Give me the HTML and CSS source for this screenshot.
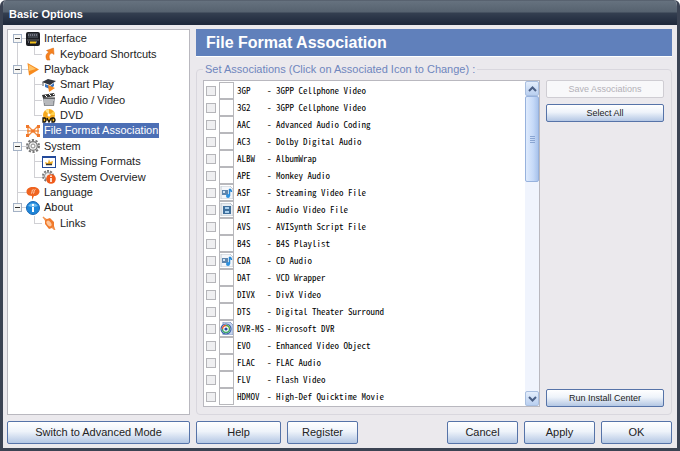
FILE: index.html
```html
<!DOCTYPE html>
<html lang="en">
<head>
<meta charset="utf-8">
<title>Basic Options</title>
<link rel="stylesheet" href="styles.css">
</head>
<body>
<div class="window">
  <header class="titlebar">Basic Options</header>
  <main class="body">
    <nav class="tree" aria-label="Option pages">
      <ul>
        <li class="root first"><button class="toggle" aria-label="Collapse Interface"></button>
          <svg class="ico" viewBox="0 0 14 14"><rect x="0" y="0" width="14" height="14" rx="2" fill="#1c1e22"/><rect x="2" y="1" width="10" height="5" fill="#3c4148"/><path d="M2 3h10M2 10h2M10 10h2" stroke="#aab" stroke-width="1" stroke-dasharray="1 1"/><path d="M4 10.500h6" stroke="#f5c21b" stroke-width="2"/><path d="M1 8h12" stroke="#666"/></svg>
          <a href="#interface">Interface</a></li>
        <li class="child last"><svg class="ico" viewBox="0 0 14 14"><path d="M5 13C3 9.500 4 6.500 7 5L4.500 3.500 11.500 1 12 7.500 10 6C7 7 6.500 9.500 8 13z" fill="#f58220" stroke="#d9660d" stroke-width=".5"/></svg>
          <a href="#keyboard">Keyboard Shortcuts</a></li>
        <li class="root"><button class="toggle" aria-label="Collapse Playback"></button>
          <svg class="ico" viewBox="0 0 14 14"><path d="M1.500 1 13 7.500 3 13.500z" fill="#f78b1e"/><path d="M2.500 2.500 10 7 3 9z" fill="#ffc266"/></svg>
          <a href="#playback">Playback</a></li>
        <li class="child"><svg class="ico" viewBox="0 0 14 14"><path d="M0 4 6 1l8 2-6 4z" fill="#30343c"/><path d="M3 6l5 2 4-3v3L8 11 3 9z" fill="#3973be"/><path d="M6 7l7 3-6 4z" fill="#f58a20"/><path d="M1 4v4" stroke="#555"/></svg>
          <a href="#smart">Smart Play</a></li>
        <li class="child"><svg class="ico" viewBox="0 0 14 14"><path d="M0 2 12 0l1 3L1 5z" fill="#333"/><path d="M3 2l2 2M7 1l2 2M11 1l1 1" stroke="#fff"/><path d="M1 5h12l-1 8H2z" fill="#8b8e93"/><path d="M2 7h10M2 9h9M3 11h8" stroke="#e2e3e5"/><path d="M1 5h12" stroke="#333"/></svg>
          <a href="#av">Audio / Video</a></li>
        <li class="child last"><svg class="ico" viewBox="0 0 14 14"><circle cx="7" cy="6" r="6" fill="#f5a81c"/><path d="M7 6 3 1.500 7 0z" fill="#ffe48a"/><path d="M7 6l5-4 1 4z" fill="#ffd34f"/><circle cx="7" cy="6" r="1.500" fill="#fff"/><path d="M1 9v4h2q2-2 0-4zM5 9l2 4 2-4M10 9v4h2q2-2 0-4z" fill="#f9bd21" stroke="#17130a" stroke-width="1.300"/></svg>
          <a href="#dvd">DVD</a></li>
        <li class="root"><svg class="ico lone" viewBox="0 0 14 14"><path d="M2 2l10 10M12 2 2 12M2 2v10M12 2v10M7 7h6M1 7h6" stroke="#f28a3c" stroke-width="1.300"/><path d="M0 1h3v3H0zM11 1h3v3h-3zM0 10h3v3H0zM11 10h3v3h-3zM5.500 5.500h3v3h-3z" fill="#f0772a"/></svg>
          <a class="selected" href="#formats" aria-current="page">File Format Association</a></li>
        <li class="root"><button class="toggle" aria-label="Collapse System"></button>
          <svg class="ico" viewBox="0 0 14 14"><circle cx="7" cy="7" r="6" fill="none" stroke="#777" stroke-width="2" stroke-dasharray="2.200 1.570"/><circle cx="7" cy="7" r="4.300" fill="#eee" stroke="#777" stroke-width="1.200"/><circle cx="7" cy="7" r="2" fill="#fff" stroke="#888"/></svg>
          <a href="#system">System</a></li>
        <li class="child"><svg class="ico" viewBox="0 0 14 14"><rect x=".5" y="1.500" width="13" height="11" fill="#fff" stroke="#234a9a"/><path d="M0 2h14" stroke="#234a9a" stroke-width="2"/><path d="M7 4l1 3 3-1-1 4H4L3 7l3 1z" fill="#f5ac1e"/><path d="M4 9.500h6" stroke="#333" stroke-width="1.500"/></svg>
          <a href="#missing">Missing Formats</a></li>
        <li class="child last"><svg class="ico" viewBox="0 0 14 14"><circle cx="6" cy="6" r="5" fill="none" stroke="#777" stroke-width="2" stroke-dasharray="2 1.140"/><circle cx="6" cy="6" r="3.500" fill="#eee" stroke="#888"/><circle cx="9" cy="9" r="4.800" fill="#ef5a1a"/><path d="M9 8v4M9 5.500v1.500" stroke="#fff" stroke-width="1.600"/></svg>
          <a href="#overview">System Overview</a></li>
        <li class="root"><svg class="ico lone" viewBox="0 0 14 14"><path d="M7 1c4 0 6.500 1.800 6.500 4.500S11 10 8 10l-2 4v-4C2 9.800.5 8 .5 5.500S3 1 7 1z" fill="#ef6420"/><path d="M5 7.500c2 0 0-4 2.500-4M7 7.500c2 0 0-4 2.500-4" fill="none" stroke="#ffd2b8"/></svg>
          <a href="#language">Language</a></li>
        <li class="root end"><button class="toggle" aria-label="Collapse About"></button>
          <svg class="ico" viewBox="0 0 14 14"><circle cx="7" cy="7" r="6.500" fill="#1f86d8" stroke="#1766b4"/><path d="M2 5a5.500 4.500 0 0 1 10 0q-5 2-10 0z" fill="#6dbaf0"/><path d="M7 6v5M7 3v2" stroke="#fff" stroke-width="2"/></svg>
          <a href="#about">About</a></li>
        <li class="child last bare"><svg class="ico" viewBox="0 0 14 14"><path d="M2 2l3 1 3-1 4 4v4l1 3-3-1-3 1-4-5V5z" fill="#f07a2c"/><ellipse cx="7" cy="7.500" rx="2" ry="3.200" transform="rotate(-40 7 7.500)" fill="#ffc79b"/><path d="M1 1l3 3M10 11l3 3" stroke="#f0934f" stroke-width="1.500"/></svg>
          <a href="#links">Links</a></li>
      </ul>
    </nav>
    <section class="page">
      <h1>File Format Association</h1>
      <fieldset>
        <legend>Set Associations (Click on Associated Icon to Change) :</legend>
        <div class="panel">
          <div class="listbox">
            <ul class="formats">
              <li><input type="checkbox" id="f1"><button class="slot" aria-label="3GP icon"></button><label for="f1"><span>3GP</span><span>-</span><span>3GPP Cellphone Video</span></label></li>
              <li><input type="checkbox" id="f2"><button class="slot" aria-label="3G2 icon"></button><label for="f2"><span>3G2</span><span>-</span><span>3GPP Cellphone Video</span></label></li>
              <li><input type="checkbox" id="f3"><button class="slot" aria-label="AAC icon"></button><label for="f3"><span>AAC</span><span>-</span><span>Advanced Audio Coding</span></label></li>
              <li><input type="checkbox" id="f4"><button class="slot" aria-label="AC3 icon"></button><label for="f4"><span>AC3</span><span>-</span><span>Dolby Digital Audio</span></label></li>
              <li><input type="checkbox" id="f5"><button class="slot" aria-label="ALBW icon"></button><label for="f5"><span>ALBW</span><span>-</span><span>AlbumWrap</span></label></li>
              <li><input type="checkbox" id="f6"><button class="slot" aria-label="APE icon"></button><label for="f6"><span>APE</span><span>-</span><span>Monkey Audio</span></label></li>
              <li><input type="checkbox" id="f7"><button class="slot" aria-label="ASF icon"><svg viewBox="0 0 13 13"><path d="M1 0h9l3 3v10H1z" fill="#f3f6fa" stroke="#c3cad2"/><path d="M2 4h6v5H2z" fill="#5f86ad"/><path d="M3 5h2v2H3z" fill="#cfe3f5"/><path d="M9.500 3v7M9.500 3q2 1 2 3" fill="none" stroke="#2386d6" stroke-width="1.500"/><circle cx="8" cy="10" r="2" fill="#2c91df"/></svg></button><label for="f7"><span>ASF</span><span>-</span><span>Streaming Video File</span></label></li>
              <li><input type="checkbox" id="f8"><button class="slot" aria-label="AVI icon"><svg viewBox="0 0 13 13"><path d="M1 0h9l3 3v10H1z" fill="#e8edf2" stroke="#bcc4cc"/><path d="M3 3h8v8H3z" fill="#3f6f9c"/><path d="M5 4h4v2H5zM5 8h4v2H5z" fill="#a9d0ef"/></svg></button><label for="f8"><span>AVI</span><span>-</span><span>Audio Video File</span></label></li>
              <li><input type="checkbox" id="f9"><button class="slot" aria-label="AVS icon"></button><label for="f9"><span>AVS</span><span>-</span><span>AVISynth Script File</span></label></li>
              <li><input type="checkbox" id="f10"><button class="slot" aria-label="B4S icon"></button><label for="f10"><span>B4S</span><span>-</span><span>B4S Playlist</span></label></li>
              <li><input type="checkbox" id="f11"><button class="slot" aria-label="CDA icon"><svg viewBox="0 0 13 13"><path d="M1 0h9l3 3v10H1z" fill="#f3f6fa" stroke="#c3cad2"/><path d="M2 4h6v5H2z" fill="#5f86ad"/><path d="M3 5h2v2H3z" fill="#cfe3f5"/><path d="M9.500 3v7M9.500 3q2 1 2 3" fill="none" stroke="#2386d6" stroke-width="1.500"/><circle cx="8" cy="10" r="2" fill="#2c91df"/></svg></button><label for="f11"><span>CDA</span><span>-</span><span>CD Audio</span></label></li>
              <li><input type="checkbox" id="f12"><button class="slot" aria-label="DAT icon"></button><label for="f12"><span>DAT</span><span>-</span><span>VCD Wrapper</span></label></li>
              <li><input type="checkbox" id="f13"><button class="slot" aria-label="DIVX icon"></button><label for="f13"><span>DIVX</span><span>-</span><span>DivX Video</span></label></li>
              <li><input type="checkbox" id="f14"><button class="slot" aria-label="DTS icon"></button><label for="f14"><span>DTS</span><span>-</span><span>Digital Theater Surround</span></label></li>
              <li><input type="checkbox" id="f15"><button class="slot" aria-label="DVR-MS icon"><svg viewBox="0 0 13 13"><path d="M3 0h7l3 3v10H3z" fill="#c5d4ee" stroke="#8ea2c8"/><circle cx="6" cy="7" r="5" fill="#fff" stroke="#3c63ad" stroke-width="1.200"/><path d="M2.500 7A3.500 3.500 0 0 1 6 3.500" fill="none" stroke="#e4572e" stroke-width="1.500"/><path d="M6 3.500A3.500 3.500 0 0 1 9.500 7" fill="none" stroke="#58ab3c" stroke-width="1.500"/><path d="M2.500 7A3.500 3.500 0 0 0 9.500 7" fill="none" stroke="#3faa68" stroke-width="1.500"/><circle cx="6" cy="7" r="1.600" fill="#234da0"/></svg></button><label for="f15"><span>DVR-MS</span><span>-</span><span>Microsoft DVR</span></label></li>
              <li><input type="checkbox" id="f16"><button class="slot" aria-label="EVO icon"></button><label for="f16"><span>EVO</span><span>-</span><span>Enhanced Video Object</span></label></li>
              <li><input type="checkbox" id="f17"><button class="slot" aria-label="FLAC icon"></button><label for="f17"><span>FLAC</span><span>-</span><span>FLAC Audio</span></label></li>
              <li><input type="checkbox" id="f18"><button class="slot" aria-label="FLV icon"></button><label for="f18"><span>FLV</span><span>-</span><span>Flash Video</span></label></li>
              <li><input type="checkbox" id="f19"><button class="slot" aria-label="HDMOV icon"></button><label for="f19"><span>HDMOV</span><span>-</span><span>High-Def Quicktime Movie</span></label></li>
            </ul>
            <div class="scrollbar">
              <button class="arrow" aria-label="Scroll up"><svg viewBox="0 0 9 6"><path d="M1 5l3.500-3.500L8 5" fill="none" stroke="#4a5f85" stroke-width="2"/></svg></button>
              <div class="thumb"><i></i></div>
              <button class="arrow" aria-label="Scroll down"><svg viewBox="0 0 9 6"><path d="M1 1l3.500 3.500L8 1" fill="none" stroke="#4a5f85" stroke-width="2"/></svg></button>
            </div>
          </div>
          <div class="actions">
            <button class="btn small" disabled>Save Associations</button>
            <button class="btn small">Select All</button>
            <button class="btn small bottom">Run Install Center</button>
          </div>
        </div>
      </fieldset>
    </section>
  </main>
  <footer class="footer">
    <button class="btn mode">Switch to Advanced Mode</button>
    <button class="btn help">Help</button>
    <button class="btn">Register</button>
    <span class="spacer"></span>
    <button class="btn">Cancel</button>
    <button class="btn">Apply</button>
    <button class="btn">OK</button>
  </footer>
</div>
</body>
</html>
```
FILE: styles.css
```css
* { box-sizing: border-box; }
body {
  margin: 0;
  background: #fff;
  font: 11px/15px "Liberation Sans", Arial, sans-serif;
  color: #222;
}
ul { list-style: none; margin: 0; padding: 0; }
button, input { font: inherit; color: inherit; margin: 0; padding: 0; }
.window {
  min-height: 100vh;
  display: flex;
  flex-direction: column;
  background: #ebe9ed;
  border: solid #3b4353;
  border-width: 0 3px 3px;
  border-radius: 6px 6px 0 0;
  overflow: hidden;
}
.titlebar {
  height: 25px;
  margin: 0 -3px;
  padding: 2px 9px 0;
  font-weight: bold;
  line-height: 24px;
  color: #fff;
  background: linear-gradient(#4a5260 0, #66727f 1px, #56626f 12px, #343f50 13px, #1f293c 24px);
}
.body {
  flex: 1;
  display: flex;
  gap: 6px;
  padding: 4px 5px 6px 4px;
}
.tree {
  width: 183px;
  flex: none;
  padding: 1px 5px;
  background: #fff;
  border: 1px solid #b9b8bf;
}
.tree ul { display: grid; grid-auto-rows: 1fr; height: 200px; }
.tree li {
  display: flex;
  align-items: center;
  background-repeat: no-repeat;
  background-image: linear-gradient(#d0d0d4, #d0d0d4), linear-gradient(#d0d0d4, #d0d0d4), linear-gradient(#d0d0d4, #d0d0d4);
}
.tree .root { background-position: 4px 0, 4px 50%, 4px 50%; background-size: 1px 100%, 12px 1px, 0 0; }
.tree .first { background-position: 4px 100%, 4px 50%, 4px 50%; background-size: 1px 50%, 12px 1px, 0 0; }
.tree .end { background-size: 1px 50%, 12px 1px, 0 0; }
.tree .child { padding-left: 29px; background-position: 4px 0, 21px 0, 21px 50%; background-size: 1px 100%, 1px 100%, 8px 1px; }
.tree .last { background-size: 1px 100%, 1px 50%, 8px 1px; }
.tree .bare { background-size: 0 0, 1px 50%, 8px 1px; }
.toggle {
  width: 9px;
  height: 9px;
  margin-right: 4px;
  border: 1px solid #a3b1c5;
  background: linear-gradient(#333, #333) center / 5px 1px no-repeat, #f7f7f5;
}
.ico { width: 14px; height: 14px; flex: none; }
.lone { margin-left: 13px; }
.tree a {
  margin-left: 3px;
  padding: 0 1px;
  color: #222;
  text-decoration: none;
  white-space: nowrap;
}
.tree a.selected { background: #4c6fb5; color: #fff; }
.page { flex: 1; min-width: 0; display: flex; flex-direction: column; }
h1 {
  margin: 0 0 5px;
  padding: 0 10px;
  font-size: 16px;
  line-height: 27px;
  color: #fff;
  background: #6080bb;
  border-bottom: 1px solid #fff;
}
fieldset {
  flex: 1;
  min-width: 0;
  margin: 0;
  padding: 3px 7px 7px 6px;
  border: 1px solid #d9d7de;
  border-radius: 4px;
}
legend { padding: 0 2px; color: #6f86bd; line-height: 15px; }
.panel { display: flex; gap: 6px; }
.listbox {
  flex: 1;
  display: flex;
  background: #fff;
  border: 1px solid #b9b8bf;
}
.formats { flex: 1; padding: 1px 2px; }
.formats li { height: 17px; display: flex; align-items: center; }
.formats input {
  appearance: none;
  width: 10px;
  height: 10px;
  margin-right: 3px;
  border: 1px solid #b5b5b9;
  background: #efeff1;
}
.slot {
  width: 15px;
  height: 17px;
  display: grid;
  place-items: center;
  border: 1px solid #b8b8bc;
  background: #fff;
}
.slot svg { width: 13px; height: 13px; }
.formats label {
  display: grid;
  grid-template-columns: 30px 9px auto;
  margin-left: 3px;
  font-family: "Noto Sans CJK JP", monospace;
  font-size: 9px;
  font-feature-settings: "hwid";
  color: #000;
  white-space: nowrap;
}
.scrollbar {
  width: 14px;
  display: flex;
  flex-direction: column;
  background: #f0f4fd;
}
.arrow {
  height: 15px;
  display: grid;
  place-items: center;
  border: 1px solid #a9bfe0;
  border-radius: 2px;
  background: linear-gradient(#e4eefc, #b9cff0);
}
.arrow svg { width: 9px; height: 6px; }
.arrow:last-child { margin-top: auto; }
.thumb {
  height: 86px;
  display: grid;
  place-items: center;
  border: 1px solid #97b2dd;
  border-radius: 2px;
  background: linear-gradient(90deg, #dfebfd, #c5d9f8 60%, #a9c3ec);
}
.thumb i { width: 5px; height: 7px; background: repeating-linear-gradient(#8aa5d2 0 1px, transparent 1px 2px); }
.actions { width: 118px; display: flex; flex-direction: column; gap: 6px; }
.btn {
  width: 71px;
  height: 23px;
  border: 1px solid #5673a8;
  border-radius: 2px;
  background: linear-gradient(#fff, #eef3fa 45%, #b4c7e4);
  color: #222;
}
.small { width: auto; height: 18px; font-size: 9px; line-height: 14px; }
.btn:disabled { border-color: #cfcdd3; background: #f8f8fa; color: #b3b1b8; }
.bottom { margin-top: auto; }
.footer { display: flex; gap: 6px; padding: 0 5px 4px 4px; }
.mode { width: 183px; }
.help { width: 85px; }
.spacer { flex: 1; }
```
